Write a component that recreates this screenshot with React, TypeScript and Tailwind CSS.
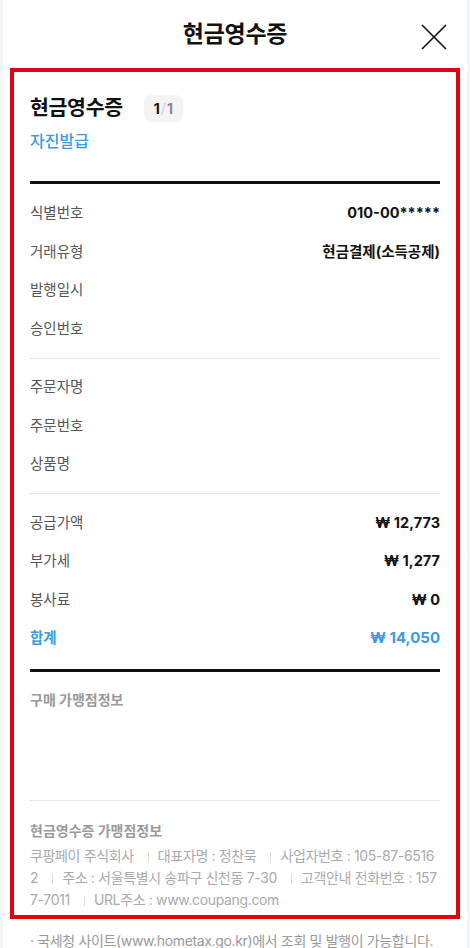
import React from "react";

const font = { fontFamily: 'Inter, "Noto Sans CJK KR", sans-serif' };

type Row = { label: string; value?: string };

const idRows: Row[] = [
  { label: "식별번호", value: "010-00*****" },
  { label: "거래유형", value: "현금결제(소득공제)" },
  { label: "발행일시" },
  { label: "승인번호" },
];

const orderRows: Row[] = [{ label: "주문자명" }, { label: "주문번호" }, { label: "상품명" }];

const amountRows: Row[] = [
  { label: "공급가액", value: "₩ 12,773" },
  { label: "부가세", value: "₩ 1,277" },
  { label: "봉사료", value: "₩ 0" },
];

const InfoRow = ({ row }: { row: Row }) => (
  <div className="h-[38.5px] flex items-center justify-between">
    <span className="text-[14.5px] text-[#555]">{row.label}</span>
    {row.value ? (
      <span className="text-[14.5px] font-bold text-[#111]">{row.value}</span>
    ) : null}
  </div>
);

const Sep = () => (
  <span className="inline-block w-px h-[10px] bg-[#ddd] ml-[14px] mr-[9px] align-middle" />
);

export default function App() {
  return (
    <div className="w-[470px] h-[948px] bg-white overflow-hidden border-x-[3px] border-[#f2f6f6]" style={font}>
      {/* header */}
      <div className="h-[68px] relative flex items-center justify-center">
        <h1 className="text-[23px] font-bold text-[#111] tracking-[-0.3px]">현금영수증</h1>
        <button className="absolute right-[20px] top-[24px] w-[26px] h-[26px]">
          <svg viewBox="0 0 26 26" width="26" height="26">
            <path d="M1 1 L25 25 M25 1 L1 25" stroke="#111" strokeWidth="1.6" fill="none" />
          </svg>
        </button>
      </div>

      {/* receipt card */}
      <div className="mx-[7px] border-4 border-[#e3000f] px-4 pt-[23px] pb-[4px]">
        <div className="flex items-center h-[27px]">
          <h2 className="text-[20.5px] font-bold text-[#111] tracking-[-0.3px]">현금영수증</h2>
          <span className="ml-[21px] h-[27px] px-[10px] rounded-lg bg-[#f4f4f4] flex items-center text-[14px] font-bold">
            <span className="text-[#111]">1</span>
            <span className="text-[#ccc] mx-[1px] font-normal">/</span>
            <span className="text-[#888]">1</span>
          </span>
        </div>
        <div className="mt-[8px] text-[16px] text-[#3a9be0] font-medium leading-[22px]">자진발급</div>

        <div className="mt-[29px] h-[3px] bg-[#111]" />

        <div className="py-[10px] border-b border-[#e5e5e5]">
          {idRows.map((r) => (
            <InfoRow key={r.label} row={r} />
          ))}
        </div>
        <div className="py-[9px] border-b border-[#e5e5e5]">
          {orderRows.map((r) => (
            <InfoRow key={r.label} row={r} />
          ))}
        </div>
        <div className="pt-[10px] pb-[11px]">
          {amountRows.map((r) => (
            <InfoRow key={r.label} row={r} />
          ))}
          <div className="h-[38.5px] flex items-center justify-between">
            <span className="text-[14.5px] font-bold text-[#3a9be0]">합계</span>
            <span className="text-[15px] font-bold text-[#3a9be0]">₩ 14,050</span>
          </div>
        </div>

        <div className="h-[3px] bg-[#111]" />

        <div className="h-[129px] pt-[18px] border-b border-[#e5e5e5]">
          <div className="text-[14px] font-bold text-[#9a9a9a] leading-[20px]">구매 가맹점정보</div>
        </div>

        <div className="pt-[20px]">
          <div className="text-[14px] font-bold text-[#9a9a9a] leading-[20px]">현금영수증 가맹점정보</div>
          <p className="mt-[4px] text-[14px] leading-[22px] text-[#aaa] break-all tracking-[-0.35px]">
            쿠팡페이 주식회사<Sep />대표자명 : 정찬묵<Sep />사업자번호 : 105-87-6516<br />2<Sep />주소 : 서울특별시 송파구 신천동 7-30<Sep />고객안내 전화번호 : 157<br />7-7011<Sep />URL주소 : www.coupang.com
          </p>
        </div>
      </div>

      <p className="mt-[12px] px-[27px] text-[14px] leading-[20px] text-[#999] whitespace-nowrap tracking-[-0.35px]">
        · 국세청 사이트(www.hometax.go.kr)에서 조회 및 발행이 가능합니다.
      </p>
    </div>
  );
}
